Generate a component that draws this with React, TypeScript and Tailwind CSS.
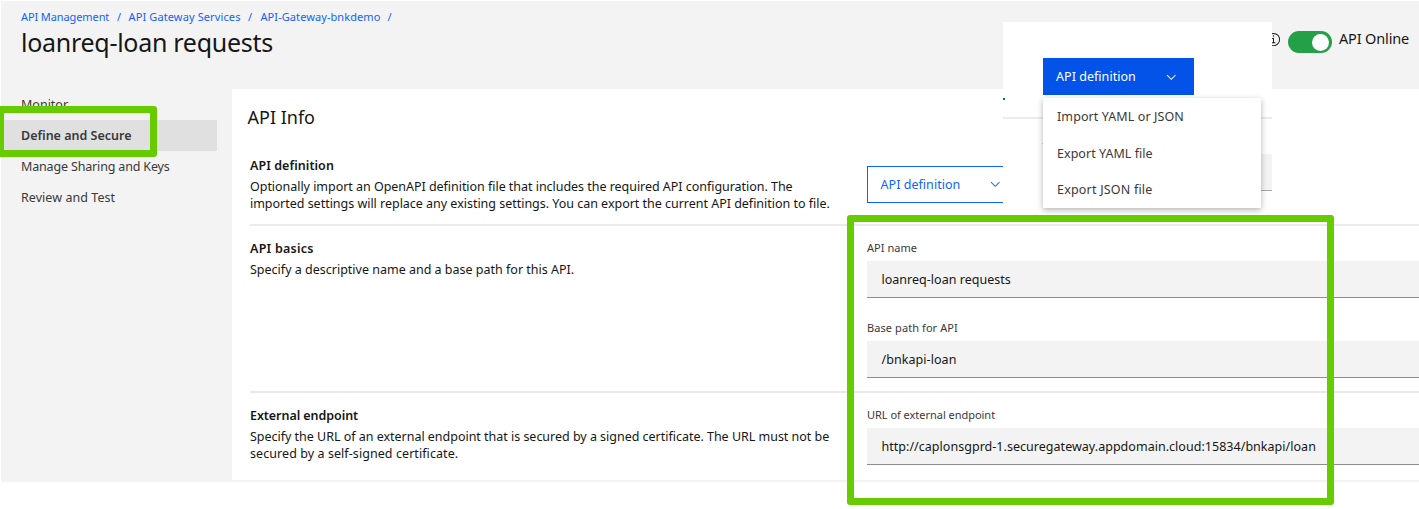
import type { ReactNode } from 'react';

function Chevron({ className = '' }: { className?: string }) {
  return (
    <svg viewBox="0 0 16 16" className={`h-[14.5px] w-[14.5px] ${className}`} fill="currentColor">
      <path d="M8 11 3 6l.7-.7L8 9.6l4.3-4.3.7.7z" />
    </svg>
  );
}

function InfoIcon() {
  return (
    <svg viewBox="0 0 16 16" className="h-[15px] w-[15px]" fill="#161616">
      <path d="M8.5 11V6.5h-2v1h1V11H6v1h4v-1zM8 3.5a.75.75 0 1 0 0 1.5.75.75 0 0 0 0-1.5z" />
      <path d="M8 15A7 7 0 1 1 8 1a7 7 0 0 1 0 14zM8 2a6 6 0 1 0 0 12A6 6 0 0 0 8 2z" />
    </svg>
  );
}

function NavItem({ children }: { children: ReactNode }) {
  return <a className="flex h-[31px] items-center pt-0.5 pl-5 text-[#393939]">{children}</a>;
}

function Section({
  title,
  description,
  className,
  children,
}: {
  title: ReactNode;
  description: ReactNode;
  className: string;
  children: ReactNode;
}) {
  return (
    <section className={`ml-[18px] flex ${className}`}>
      <div className="w-[617px] shrink-0 pt-px">
        <h3 className="h-[18px] leading-[18px] font-semibold">{title}</h3>
        <p className="mt-1 leading-[16.5px] whitespace-nowrap">{description}</p>
      </div>
      <div className="flex-1">{children}</div>
    </section>
  );
}

function Field({ label, value }: { label: ReactNode; value: ReactNode }) {
  return (
    <label className="block">
      <span className="block h-4 text-[11px] leading-[18px] text-[#393939]">{label}</span>
      <span className="mt-1.5 flex h-[37px] items-center border-b border-[#8d8d8d] bg-[#f3f3f3] pt-0.5 pl-[14px]">
        {value}
      </span>
    </label>
  );
}

export default function App() {
  return (
    <div className="relative h-[509px] w-[1419px] overflow-hidden bg-white pt-px pl-px font-['Noto_Sans',sans-serif] text-[12.5px] text-[#161616]">
      <header className="flex h-[88px] justify-between bg-[#f3f3f3] pt-2 pl-5">
        <div>
          <nav className="flex h-4 text-[11px] leading-4 whitespace-nowrap text-[#0f62fe]">
            <a className="w-[96px] tracking-[-0.1px]">API Management</a>
            <span className="w-[11.5px]">/</span>
            <a className="w-[119.5px] tracking-[0.12px]">API Gateway Services</a>
            <span className="w-[12.5px]">/</span>
            <a className="w-[127px] tracking-[0.08px]">API-Gateway-bnkdemo</a>
            <span>/</span>
          </nav>
          <h1 className="mt-px h-8 text-[25px] leading-8 tracking-[-0.28px]">
            loanreq-loan requests
          </h1>
        </div>
        <div className="flex items-start pr-[9px]">
          <div className="mt-[22.5px]">
            <InfoIcon />
          </div>
          <div className="mt-[22px] ml-[7px] flex h-[22px] w-11 items-center justify-end rounded-full bg-[#24a148] pr-[3px]">
            <span className="h-[17px] w-[17px] rounded-full bg-white" />
          </div>
          <span className="mt-[19px] ml-[7px] w-[71px] text-[14.5px] leading-5 tracking-[-0.16px] whitespace-nowrap">
            API Online
          </span>
        </div>
      </header>

      <div className="flex h-[393px] bg-[#f3f3f3]">
        <aside className="w-[231px] shrink-0">
          <div className="w-[216px]">
            <NavItem>Monitor</NavItem>
            <a className="flex h-[31px] items-center bg-[#e0e0e0] pt-0.5 pl-5 font-semibold text-[#393939]">
              Define and Secure
            </a>
            <NavItem>
              <span className="tracking-[-0.16px]">Manage Sharing and Keys</span>
            </NavItem>
            <NavItem>
              <span className="tracking-[0.05px]">Review and Test</span>
            </NavItem>
          </div>
        </aside>

        <main className="h-[391px] flex-1 bg-white pt-4">
          <h2 className="ml-[15.5px] h-6 text-[18px] leading-6">API Info</h2>

          <Section
            className="h-[95px] pt-[27px]"
            title={<span className="tracking-[0.06px]">API definition</span>}
            description={
              <>
                <span className="tracking-[-0.035px]">
                  Optionally import an OpenAPI definition file that includes the required API
                  configuration. The
                </span>
                <br />
                <span className="tracking-[-0.02px]">
                  imported settings will replace any existing settings. You can export the current
                  API definition to file.
                </span>
              </>
            }
          >
            <button className="mt-[10px] flex h-[37px] w-[151px] items-center justify-between border border-[#0f62fe] pt-0.5 pr-[14.5px] pl-[12.5px] tracking-[0.04px] text-[#0f62fe]">
              API definition
              <Chevron className="-mt-0.5" />
            </button>
          </Section>
          <div className="ml-[18px] h-0.5 bg-[#ebebeb]" />

          <Section
            className="h-[165px] pt-[13px]"
            title={<span className="tracking-[0.25px]">API basics</span>}
            description="Specify a descriptive name and a base path for this API."
          >
            <Field
              label={<span className="tracking-[0.04px]">API name</span>}
              value={<span className="pl-[0.5px] tracking-[0.02px]">loanreq-loan requests</span>}
            />
            <div className="mt-[21px]">
              <Field
                label={<span className="tracking-[0.08px]">Base path for API</span>}
                value={<span className="pl-[0.5px] tracking-[0.06px]">/bnkapi-loan</span>}
              />
            </div>
          </Section>
          <div className="ml-[18px] h-0.5 bg-[#ebebeb]" />

          <Section
            className="h-[87px] pt-[13px]"
            title={<span className="tracking-[-0.06px]">External endpoint</span>}
            description={
              <>
                <span className="tracking-[-0.02px]">
                  Specify the URL of an external endpoint that is secured by a signed certificate.
                  The URL must not be
                </span>
                <br />
                <span className="tracking-[0.07px]">secured by a self-signed certificate.</span>
              </>
            }
          >
            <Field
              label={<span className="tracking-[-0.03px]">URL of external endpoint</span>}
              value={
                <span className="pl-[0.5px] tracking-[0.03px]">
                  http://caplonsgprd-1.securegateway.appdomain.cloud:15834/bnkapi/loan
                </span>
              }
            />
          </Section>
        </main>
      </div>

      {/* Expanded menu inset */}
      <div className="absolute top-[22px] left-[1003px] h-[192px] w-[269px] bg-white">
        <span className="absolute top-[76px] left-0 h-0.5 w-0.5 bg-[#0f62a0]" />
        <span className="absolute top-[95px] left-0 h-0.5 w-full bg-[#ebebeb]" />
        <span className="absolute top-[121px] left-[39px] h-px w-px bg-[#f5c98a]" />
        <span className="absolute top-[132px] right-0 h-[37px] w-12 border-b border-[#a8a8a8] bg-[#f3f3f3]" />
        <div className="relative pt-9 pl-10">
          <button className="flex h-[37px] w-[151px] items-center justify-between bg-[#0353e9] pt-0.5 pr-[15.5px] pl-[13px] tracking-[0.04px] text-white">
            API definition
            <Chevron className="-mt-px" />
          </button>
          <ul className="mt-[3px] flex h-[110px] w-[218px] flex-col bg-white text-[#393939] shadow-[0_2px_6px_rgba(0,0,0,0.3)]">
            <li className="flex flex-1 items-center pt-0.5 pl-[14px] tracking-[0.1px]">
              Import YAML or JSON
            </li>
            <li className="flex flex-1 items-center pt-0.5 pl-[14px] tracking-[0.04px]">
              Export YAML file
            </li>
            <li className="flex flex-1 items-center pt-0.5 pl-[14px] tracking-[0.2px]">
              Export JSON file
            </li>
          </ul>
        </div>
      </div>

      {/* Highlight frames */}
      <div className="absolute top-[106px] left-[-3px] h-[51px] w-[160px] rounded-[3px] border-7 border-[#66cc00]" />
      <div className="absolute top-[215px] left-[847px] h-[290px] w-[487px] rounded-[3px] border-7 border-[#66cc00]" />
    </div>
  );
}
